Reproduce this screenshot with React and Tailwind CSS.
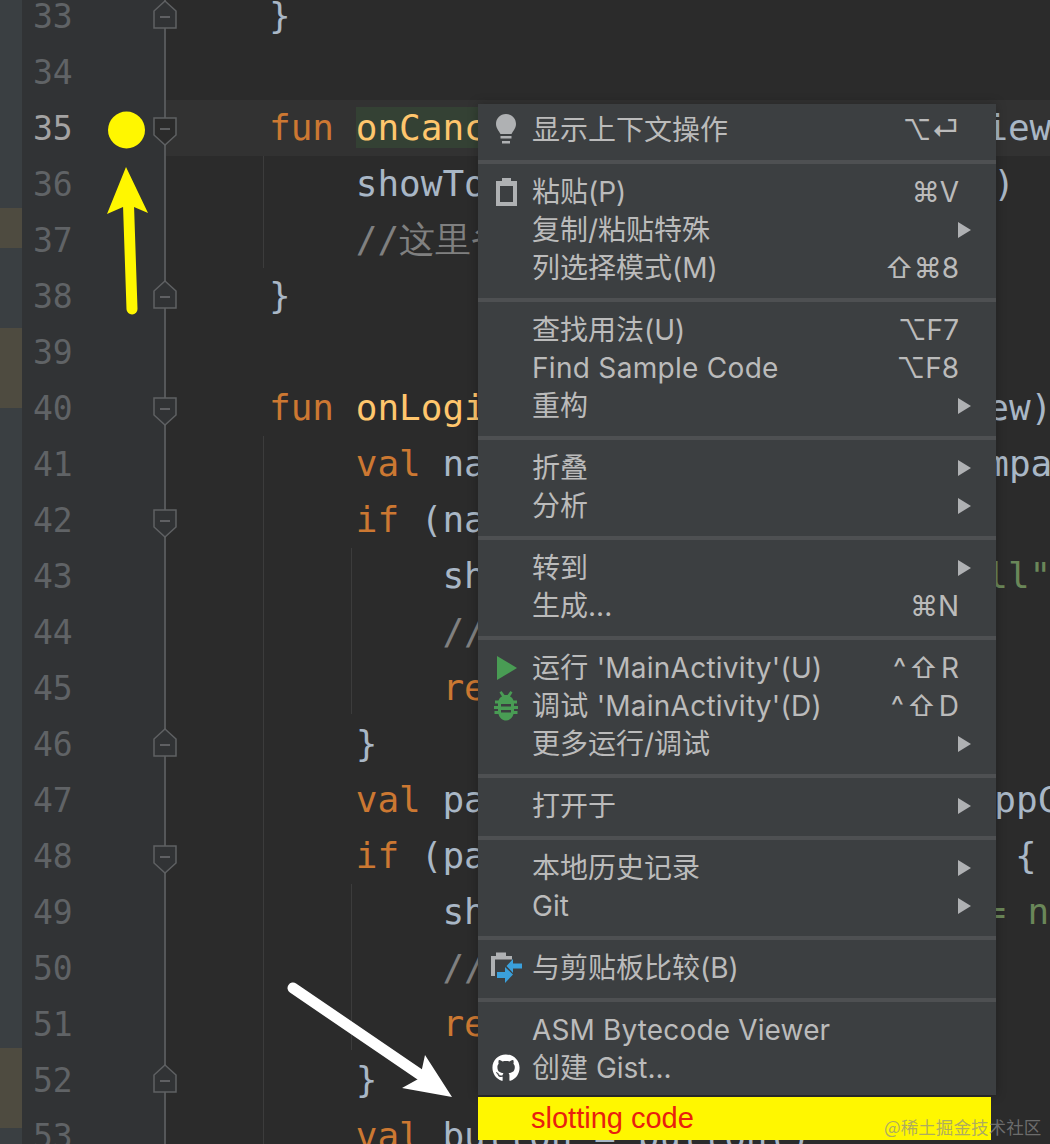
import React from "react";
import { FaGithub } from "react-icons/fa";

const K = "text-[#cc7832]";
const F = "text-[#ffc66d]";
const T = "text-[#a9b7c6]";
const C = "text-[#808080]";
const G = "text-[#6a8759]";
const sp = (n) => " ".repeat(n);

const lines = [
  { n: 33, fold: "up", code: [["}", T]] },
  { n: 34, code: [] },
  { n: 35, fold: "down", active: true, code: [["fun ", K], ["onCancel", F, "bg-[#344134]"], [sp(21), T], ["iew", T, "ml-[2px]"]] },
  { n: 36, code: [[sp(4), T], ["showToast", T], [sp(20), T], [")", T, "ml-[9px]"]] },
  { n: 37, code: [[sp(4), T], ["//这里省略", C]] },
  { n: 38, fold: "up", code: [["}", T]] },
  { n: 39, code: [] },
  { n: 40, fold: "down", code: [["fun ", K], ["onLogin", F], [sp(22), T], ["ew)", T, "ml-[3px]"]] },
  { n: 41, code: [[sp(4), T], ["val ", K], ["name", T], [sp(21), T], ["mpa", T, "ml-[3px]"]] },
  { n: 42, fold: "down", code: [[sp(4), T], ["if ", K], ["(name", T]] },
  { n: 43, code: [[sp(8), T], ["show", T], [sp(21), T], ["ll\"", G, "ml-[2px]"]] },
  { n: 44, code: [[sp(8), T], ["//", C]] },
  { n: 45, code: [[sp(8), T], ["return", K]] },
  { n: 46, fold: "up", code: [[sp(4), T], ["}", T]] },
  { n: 47, code: [[sp(4), T], ["val ", K], ["pass", T], [sp(21), T], ["ppC", T, "ml-[10px]"]] },
  { n: 48, fold: "down", code: [[sp(4), T], ["if ", K], ["(pass", T], [sp(22), T], ["{", T, "ml-[9px]"]] },
  { n: 49, code: [[sp(8), T], ["show", T], [sp(21), T], ["= n", G]] },
  { n: 50, code: [[sp(8), T], ["//", C]] },
  { n: 51, code: [[sp(8), T], ["return", K]] },
  { n: 52, fold: "up", code: [[sp(4), T], ["}", T]] },
  { n: 53, code: [[sp(4), T], ["val ", K], ["button = button()", T]] },
];

function Fold({ dir, active }) {
  const fill = active ? "#2b2b2b" : "#313335";
  const pts = dir === "up" ? "12,1 23,11 23,28 1,28 1,11" : "1,1 23,1 23,18 12,28 1,18";
  const my = dir === "up" ? 17 : 12;
  return (
    <svg width="24" height="29" viewBox="0 0 24 29" className={`shrink-0 ${dir === "up" ? "-translate-y-[2px]" : "translate-y-[3px]"}`}>
      <polygon points={pts} fill={fill} stroke="#5f6163" strokeWidth="1.5" />
      <line x1="7" x2="17" y1={my} y2={my} stroke="#6f7173" strokeWidth="1.5" />
    </svg>
  );
}

const Bulb = () => (
  <svg width="22" height="32" viewBox="0 0 22 32">
    <path d="M11 0C5 0 1 4.500 1 10c0 4.500 3 7 4.500 10h11C18 17 21 14.500 21 10 21 4.500 17 0 11 0z" fill="#afb1b3" />
    <rect x="5.500" y="22" width="11" height="2.500" fill="#afb1b3" />
    <rect x="7" y="27" width="8" height="2.500" fill="#afb1b3" />
  </svg>
);

const Clip = () => (
  <svg width="21" height="28" viewBox="0 0 21 28">
    <path fillRule="evenodd" d="M0 3h6V0h9v3h6v25H0zM4 8v16h13V8z" fill="#afb1b3" />
  </svg>
);

const Play = () => (
  <svg width="22" height="26" viewBox="0 0 22 26" className="translate-x-[1px]">
    <polygon points="1,1 21,13 1,25" fill="#499c54" />
  </svg>
);

const Bug = () => (
  <svg width="26" height="30" viewBox="0 0 26 30">
    <path d="M6.500 1.500l2-1.500 3 4h3l3-4 2 1.500L17 5.500c2 1 3 2.500 3.500 4h3.500v3h-3v2.500h4v3h-4v2h3.500v3h-4C19.500 27 16.500 29.500 13 29.500S6.500 27 5.500 23H1.500v-3H5v-2H1v-3h4v-2.500H2v-3h3.500C6 8 7 6.500 9 5.500z" fill="#499c54" />
    <rect x="8" y="13" width="10" height="2.500" fill="#3c3f41" />
    <rect x="8" y="19" width="10" height="2.500" fill="#3c3f41" />
  </svg>
);

const Compare = () => (
  <svg width="32" height="34" viewBox="0 0 32 34" className="translate-x-[1px]">
    <path d="M0 5h5V1.500h10V5h6v3.500H4V25H0z" fill="#afb1b3" />
    <polygon points="15.500,15 22,8 22,12.500 31,12.500 31,17.500 22,17.500 22,22" fill="#3aa0dc" />
    <polygon points="22,23.500 14,32 14,27 6,27 6,21 14,21 14,16" fill="#3aa0dc" />
  </svg>
);

const Sub = () => (
  <svg width="13" height="16" viewBox="0 0 13 16">
    <polygon points="0,0 13,8 0,16" fill="#afb1b3" />
  </svg>
);

function Item({ icon, label, shortcut, sub, labelClass = "", keyClass = "" }) {
  return (
    <div className={`flex h-[38px] items-center ${sub ? "pr-[25px]" : "pr-[37px]"}`}>
      <div className="flex w-[54px] shrink-0 justify-center pl-[2px]">{icon}</div>
      <span className={`whitespace-pre ${labelClass}`}>{label}</span>
      {shortcut && <span className={`ml-auto whitespace-pre ${keyClass}`}>{shortcut}</span>}
      {sub && <span className="ml-auto flex"><Sub /></span>}
    </div>
  );
}

const Sep = () => <div className="mt-[11px] mb-[9px] h-[4px] bg-[#4e5052]" />;

export default function App() {
  return (
    <div className="relative flex h-[1144px] w-[1050px] overflow-hidden bg-[#2b2b2b] font-['DejaVu_Sans_Mono',monospace]">
      {/* left strip */}
      <div className="flex w-[22px] shrink-0 flex-col bg-[#3a3f42]">
        <div className="h-[208px]" />
        <div className="h-[40px] bg-[#4e4b40]" />
        <div className="h-[80px]" />
        <div className="h-[80px] bg-[#4e4b40]" />
        <div className="h-[640px]" />
        <div className="h-[80px] bg-[#4e4b40]" />
      </div>

      {/* gutter */}
      <div className="relative z-10 w-[143px] shrink-0 bg-[#313335]">
        <div className="absolute top-0 bottom-0 left-[142px] w-[2px] bg-[#555759]" />
        <div className="relative -mt-[12px]">
          {lines.map((l) => (
            <div key={l.n} className="relative flex h-[56px] items-center">
              <span className={`ml-[11px] w-[120px] shrink-0 translate-y-[1px] text-[33px] leading-[56px] ${l.active ? "text-[#a4a3a3]" : "text-[#606366]"}`}>{l.n}</span>
              {l.fold && <Fold dir={l.fold} active={l.active} />}
            </div>
          ))}
        </div>
      </div>

      {/* editor */}
      <div className="relative min-w-0 flex-1">
        <div className="absolute top-[156px] left-[98px] h-[112px] w-[1px] bg-[#3c3c3c]" />
        <div className="absolute top-[436px] left-[98px] h-[708px] w-[1px] bg-[#3c3c3c]" />
        <div className="absolute top-[548px] left-[186px] h-[166px] w-[1px] bg-[#3c3c3c]" />
        <div className="absolute top-[884px] left-[186px] h-[166px] w-[1px] bg-[#3c3c3c]" />
        <div className="-mt-[12px]">
          {lines.map((l) => (
            <div key={l.n} className={`h-[56px] whitespace-pre pl-[104px] text-[36px] leading-[56px] ${l.active ? "bg-[#323232]" : ""}`}>
              {l.code.map((s, i) => (
                <span key={i} className={`${s[1]} ${s[2] || ""}`}>{s[0]}</span>
              ))}
            </div>
          ))}
        </div>
      </div>

      {/* annotations */}
      <svg className="absolute top-0 left-0 z-20" width="478" height="1144" viewBox="0 0 478 1144">
        <circle cx="126.500" cy="130" r="18.500" fill="#fff700" />
        <polygon points="126,167 148,213 134,207 123,207 107,214" fill="#fff700" />
        <path d="M128.500 205L132 309" stroke="#fff700" strokeWidth="11" strokeLinecap="round" />
        <path d="M293 988L425 1078" stroke="#ffffff" strokeWidth="11" strokeLinecap="round" />
        <polygon points="452,1097 402,1088 420,1078 425,1055" fill="#ffffff" />
      </svg>

      {/* context menu */}
      <div className="absolute top-[104px] left-[478px] z-20 w-[518px] font-['Inter','Noto_Sans_CJK_SC','DejaVu_Sans',sans-serif] text-[28px] text-[#bbbbbb]">
        <div className="bg-[#3c3f41] pt-[7px] pb-[8px] shadow-[0_0_10px_rgba(0,0,0,0.25)]">
          <Item icon={<Bulb />} label="显示上下文操作" shortcut="⌥⏎" />
          <Sep />
          <Item icon={<Clip />} label="粘贴(P)" shortcut="⌘V" />
          <Item label="复制/粘贴特殊" sub />
          <Item label="列选择模式(M)" shortcut="⇧⌘8" />
          <Sep />
          <Item label="查找用法(U)" shortcut="⌥F7" />
          <Item label="Find Sample Code" shortcut="⌥F8" labelClass="tracking-[0.3px]" />
          <Item label="重构" sub />
          <Sep />
          <Item label="折叠" sub />
          <Item label="分析" sub />
          <Sep />
          <Item label="转到" sub />
          <Item label="生成..." shortcut="⌘N" />
          <Sep />
          <Item icon={<Play />} label="运行 'MainActivity'(U)" shortcut="^⇧R" labelClass="tracking-[0.25px]" keyClass="-mr-[3px] tracking-[3px]" />
          <Item icon={<Bug />} label="调试 'MainActivity'(D)" shortcut="^⇧D" labelClass="tracking-[0.25px]" keyClass="-mr-[3px] tracking-[3px]" />
          <Item label="更多运行/调试" sub />
          <Sep />
          <Item label="打开于" sub />
          <Sep />
          <Item label="本地历史记录" sub />
          <Item label="Git" sub />
          <Sep />
          <Item icon={<Compare />} label="与剪贴板比较(B)" />
          <Sep />
          <Item label="ASM Bytecode Viewer" labelClass="tracking-[0.15px]" />
          <Item icon={<FaGithub className="text-[28px] text-white" />} label="创建 Gist..." />
        </div>
        <div className="mt-[2px] flex h-[43px] w-[513px] items-center bg-[#fff700] pl-[53px] font-['Liberation_Sans',sans-serif] text-[29px] text-[#e8200f]">
          slotting code
        </div>
      </div>

      {/* watermark */}
      <span className="absolute top-[1114px] left-[884px] z-30 font-['Noto_Sans_CJK_SC',sans-serif] text-[17.6px] text-[#8a8a8a]/70">@稀土掘金技术社区</span>
    </div>
  );
}
